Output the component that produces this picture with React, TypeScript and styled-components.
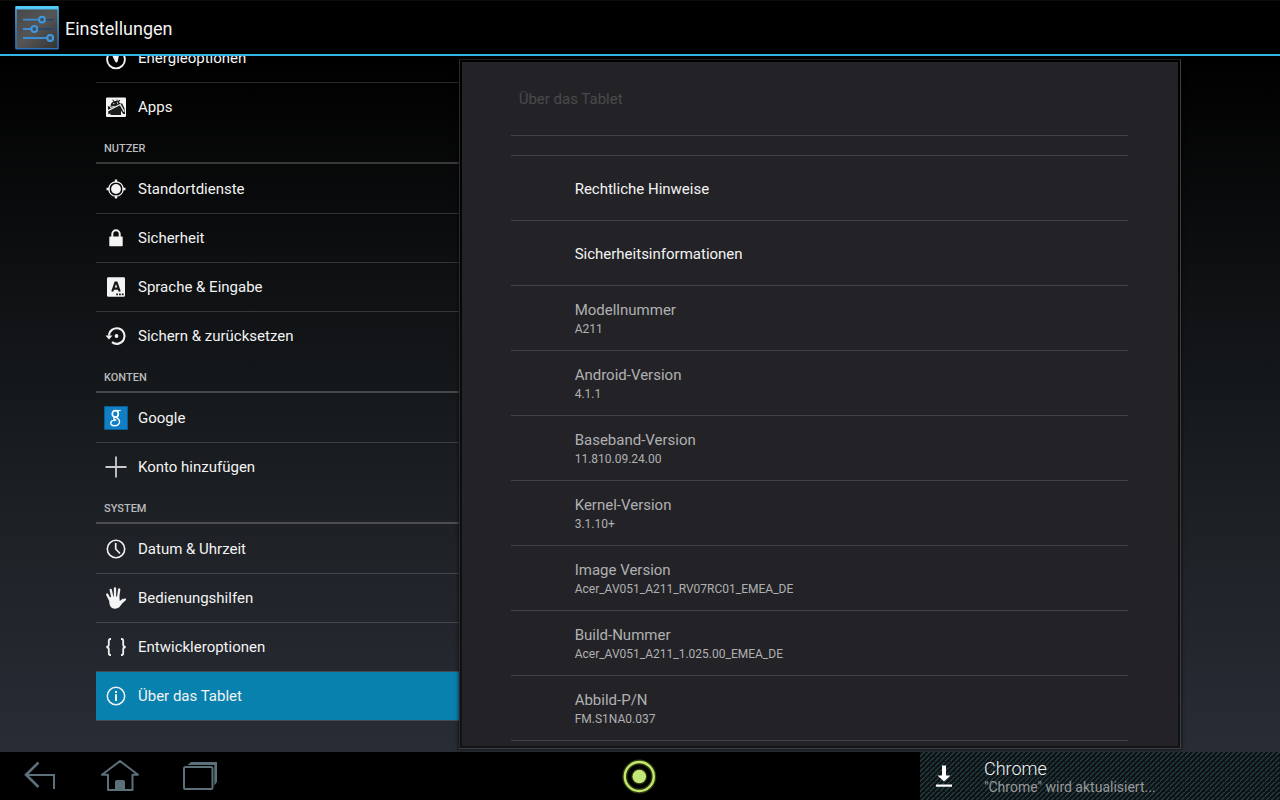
import React from "react";
import styled, { createGlobalStyle } from "styled-components";

const GlobalStyle = createGlobalStyle`
  * { box-sizing: border-box; }
  html, body, #root { height: 100%; }
  body {
    margin: 0;
    background: #000;
    color: #f3f3f3;
    font-family: Roboto, "Noto Sans", sans-serif;
    font-size: 15px;
    overflow: hidden;
  }
  h1, h2, h3, p, ul, dl, dd { margin: 0; padding: 0; }
  ul { list-style: none; }
  svg { display: block; flex: none; }
`;

const Screen = styled.div`
  display: grid;
  grid-template-rows: 56px minmax(0, 1fr) 48px;
  height: 100vh;
`;

const ActionBar = styled.header`
  display: flex;
  align-items: center;
  gap: 5px;
  padding: 1px 14px 0;
  background: #000;
  border-top: 1px solid #0c0c0c;
  border-bottom: 2px solid #33b5e5;
`;

const Heading = styled.h1`
  padding-top: 1px;
  font-size: 18px;
  line-height: 24px;
  font-weight: 400;
`;

const Main = styled.main`
  display: grid;
  grid-template-columns: minmax(0, 1fr) minmax(0, 2fr);
  padding: 0 96px;
  overflow: hidden;
  background: linear-gradient(#000 0%, #090a0b 20%, #14171a 45%, #1d2024 66%, #282c35 100%);
`;

const Sidebar = styled.nav`
  min-height: 0;
  overflow: hidden;
`;

const SectionList = styled.div`
  margin-top: -22px;
`;

const SectionTitle = styled.h2`
  height: 33px;
  padding: 10px 8px 0;
  font-size: 11px;
  line-height: 14px;
  font-weight: 500;
  color: #b9bbbd;
  text-transform: uppercase;
  border-bottom: 1px solid transparent;
  background: linear-gradient(#ffffff33, #ffffff33) bottom / 100% 2px no-repeat;
  background-clip: padding-box;
  background-origin: padding-box;
`;

const Entry = styled.li`
  border-bottom: 1px solid #ffffff28;
  &:last-child { border-bottom-color: transparent; }
  section:last-child > ul > &:last-child { border-bottom-color: #ffffff28; }
`;

const EntryLink = styled.a<{ $active?: boolean }>`
  display: flex;
  align-items: center;
  gap: 10px;
  height: 48px;
  padding: 0 8px;
  color: inherit;
  text-decoration: none;
  white-space: nowrap;
  background: ${(p) => (p.$active ? "#0881ae" : "transparent")};
`;

const Detail = styled.section`
  position: relative;
  display: flex;
  min-height: 0;
  margin: 3px 3px 3px 0;
  padding: 2px;
  border: 1px solid #3c3e40;
  border-top-color: #1c1c1c;
  border-left-color: #2a2b2d;
  background: #00000090;
  box-shadow: 0 0 3px 1px #00000080;
`;

const DetailBody = styled.div`
  flex: 1;
  min-width: 0;
  padding: 0 50px 0 49px;
  overflow: hidden;
  background: #232327;
`;

const DetailTitle = styled.h2`
  height: 74px;
  padding: 25px 8px 0;
  font-size: 15px;
  line-height: 24px;
  font-weight: 400;
  color: #49494b;
  border-bottom: 1px solid #434347;
`;

const InfoList = styled.dl`
  margin-top: 19px;
  border-top: 1px solid #434347;
`;

const Info = styled.div`
  display: flex;
  flex-direction: column;
  justify-content: center;
  height: 65px;
  padding: 1px 0 0 64px;
  border-bottom: 1px solid #434347;
`;

const InfoName = styled.dt<{ $enabled?: boolean }>`
  line-height: 20px;
  color: ${(p) => (p.$enabled ? "#f3f3f3" : "#b0b0b2")};
`;

const InfoValue = styled.dd`
  font-size: 12px;
  line-height: 18px;
  color: #b0b0b2;
`;

const SystemBar = styled.footer`
  display: grid;
  grid-template-columns: minmax(0, 1fr) auto minmax(0, 1fr);
  align-items: center;
  background: #000;
`;

const NavKeys = styled.div`
  display: flex;
`;

const Key = styled.button`
  display: flex;
  align-items: center;
  justify-content: center;
  width: 80px;
  height: 48px;
  padding: 0;
  border: 0;
  background: none;
  color: #5b7078;
`;

const Ticker = styled.aside`
  justify-self: end;
  display: flex;
  align-items: center;
  gap: 28px;
  width: 360px;
  height: 48px;
  padding: 2px 0 0 12px;
  background: #101214 linear-gradient(135deg, transparent 40%, #1c3a40 40% 60%, transparent 60%) 0 0 / 5px 5px;
`;

const TickerTitle = styled.p`
  font-size: 18px;
  line-height: 20px;
  font-weight: 300;
  color: #f3f3f3;
`;

const TickerText = styled.p`
  font-size: 14px;
  line-height: 16px;
  color: #969899;
`;

const SettingsLogo = () => (
  <svg width="46" height="46" viewBox="0 0 46 46" aria-hidden="true">
    <defs>
      <linearGradient id="face" x1="0" y1="0" x2="1" y2="1">
        <stop offset="0" stopColor="#484848" />
        <stop offset=".5" stopColor="#555" />
        <stop offset="1" stopColor="#343434" />
      </linearGradient>
      <linearGradient id="edge" x1="0" y1="0" x2="0" y2="1">
        <stop offset="0" stopColor="#42bdf0" />
        <stop offset="1" stopColor="#2a6fc0" />
      </linearGradient>
    </defs>
    <rect x="1.2" y="1" width="43.6" height="43.5" rx="1" fill="url(#edge)" />
    <rect x="2.6" y="4.5" width="40.8" height="38.5" fill="url(#face)" />
    <path d="M2 2.500h42" stroke="#54cdf8" strokeWidth="2.600" />
    <path d="M27 14.700h12M20 24h19" stroke="#20466f" strokeWidth="1.500" />
    <path d="M9 14.700h16M9 24h9M9 33h25" stroke="#3c8dd5" strokeWidth="1.800" />
    <g fill="#3d5060" stroke="#4296dc" strokeWidth="2">
      <circle cx="28" cy="14.600" r="2.900" />
      <circle cx="20.300" cy="24" r="2.900" />
      <circle cx="36.200" cy="33" r="2.900" />
    </g>
  </svg>
);

const Glyph = ({ children }: { children: React.ReactNode }) => (
  <svg width="24" height="24" viewBox="0 0 24 24" fill="none" stroke="#f0f0f0" strokeWidth="1.8" aria-hidden="true">
    {children}
  </svg>
);

const solid = { fill: "#f4f4f4", stroke: "none" };

const icons = {
  power: (
    <Glyph>
      <circle cx="12" cy="13.500" r="8.900" strokeWidth="1.900" />
      <path {...solid} d="M7.500 8L12 10l3-1-1.300 6.500-1.400 1.200-1.200-1.200z" />
    </Glyph>
  ),
  apps: (
    <Glyph>
      <rect {...solid} x="2" y="2.500" width="20" height="19.500" rx="1" />
      <path fill="#1a1c1d" stroke="none" d="M6.800 9.500C7.200 8 8.200 7 9.500 6.700L8.300 5l.7-.5 1.400 1.700c.8-.2 1.500-.2 2.200-.1V4.500h.9v1.800l2.200-1.500.6.700-1.500 1.600 1.700 1.400h1.700l2.300 5 .6 5.500h-1.900L17 15.500v4.500H6.500v-1.500l-2.200.8-.4-8.300 2.600 1z" />
      <path d="M3.500 15.800l12.700-6.300 4 7.300" strokeWidth="1.300" />
      <path d="M6 12.500l4.500-1.200" strokeWidth="1" />
      <circle {...solid} cx="9.800" cy="8.600" r=".7" />
      <circle {...solid} cx="13.500" cy="8" r=".7" />
    </Glyph>
  ),
  location: (
    <Glyph>
      <circle {...solid} cx="12" cy="12" r="4.900" />
      <circle cx="12" cy="12" r="7.200" strokeWidth="1.300" />
      <path d="M12 2.500v3M12 18.500v3M2.500 12h3M18.500 12h3" strokeWidth="2.400" />
    </Glyph>
  ),
  lock: (
    <Glyph>
      <rect {...solid} x="5.300" y="10.500" width="13.400" height="9.700" rx=".6" />
      <path d="M8.300 12V8a3.700 3.700 0 0 1 7.400 0V12" strokeWidth="2" />
    </Glyph>
  ),
  language: (
    <Glyph>
      <rect {...solid} x="3" y="2.300" width="18" height="19.400" rx="1.300" />
      <path d="M8.300 16.500L11.400 7.500h1.200l3.100 9M9.500 13.700h5" stroke="#151719" strokeWidth="2.200" />
      <path d="M12.200 19.300h7.400" stroke="#151719" strokeWidth="1.800" strokeDasharray="1.800 1" />
    </Glyph>
  ),
  backup: (
    <Glyph>
      <path d="M5 11.500A7.800 7.800 0 1 1 8 18.200" strokeWidth="2.100" />
      <path {...solid} d="M1.500 11.500h7L5 15.500z" />
      <circle {...solid} cx="12.500" cy="12" r="1.900" />
    </Glyph>
  ),
  google: (
    <svg width="24" height="24" viewBox="0 0 24 24" fill="none" aria-hidden="true">
      <rect x=".5" y=".5" width="23" height="23" fill="#117fc6" stroke="#0c5b90" />
      <g stroke="#fff">
        <ellipse cx="11.300" cy="7.900" rx="3" ry="3.300" strokeWidth="1.700" />
        <path d="M11.500 4.500h5.200" strokeWidth="1.100" />
        <path d="M12.300 11c.3 1 2.800 1.800 3.200 4.200.4 2.800-1.800 4.500-4.500 4.500-2.500 0-4.200-1-4.200-2.800 0-2 2.300-3 5.500-2.900M10.300 11.300c-1 1.200-.3 2 1 2.900" strokeWidth="1.400" />
      </g>
    </svg>
  ),
  add: (
    <Glyph>
      <path d="M12 1.500v21M1.500 12h21" stroke="#c9cacb" strokeWidth="1.800" />
    </Glyph>
  ),
  clock: (
    <Glyph>
      <circle cx="12" cy="12" r="8.700" strokeWidth="1.600" />
      <path d="M11.700 6v6l4.300 4.500" strokeWidth="1.700" />
    </Glyph>
  ),
  hand: (
    <Glyph>
      <g strokeLinecap="round" strokeWidth="2.300">
        <path d="M3.200 8.500L6 14M6.700 3.800L8.500 12M11 2.500V12M15.200 3.500L14 12M21 13.500L16 18" />
      </g>
      <path {...solid} d="M5 12l2.500-1.500h7.800l.5 4.500 3.200-2.500 1.800 1.500c-2 1.500-3 4-4.500 6s-3 2.700-5.600 2.700c-3.200 0-4.700-2.200-5.200-4.700z" />
    </Glyph>
  ),
  braces: (
    <Glyph>
      <path d="M7 4H6.300Q4.800 4 4.800 6v3.500Q4.800 12 2.300 12 4.800 12 4.800 14.500V18q0 2 1.500 2H7M17 4h.7q1.500 0 1.500 2v3.500q0 2.500 2.500 2.500-2.500 0-2.500 2.500V18q0 2-1.500 2H17" />
    </Glyph>
  ),
  info: (
    <Glyph>
      <circle cx="12" cy="12" r="8.700" strokeWidth="1.500" />
      <path d="M12 7v2M12 10.300v6.700" strokeWidth="2" />
    </Glyph>
  ),
};

type Item = { icon: keyof typeof icons; label: string; active?: boolean };

const sections: { title?: string; items: Item[] }[] = [
  {
    items: [
      { icon: "power", label: "Energieoptionen" },
      { icon: "apps", label: "Apps" },
    ],
  },
  {
    title: "Nutzer",
    items: [
      { icon: "location", label: "Standortdienste" },
      { icon: "lock", label: "Sicherheit" },
      { icon: "language", label: "Sprache & Eingabe" },
      { icon: "backup", label: "Sichern & zurücksetzen" },
    ],
  },
  {
    title: "Konten",
    items: [
      { icon: "google", label: "Google" },
      { icon: "add", label: "Konto hinzufügen" },
    ],
  },
  {
    title: "System",
    items: [
      { icon: "clock", label: "Datum & Uhrzeit" },
      { icon: "hand", label: "Bedienungshilfen" },
      { icon: "braces", label: "Entwickleroptionen" },
      { icon: "info", label: "Über das Tablet", active: true },
    ],
  },
];

const details: { name: string; value?: string }[] = [
  { name: "Rechtliche Hinweise" },
  { name: "Sicherheitsinformationen" },
  { name: "Modellnummer", value: "A211" },
  { name: "Android-Version", value: "4.1.1" },
  { name: "Baseband-Version", value: "11.810.09.24.00" },
  { name: "Kernel-Version", value: "3.1.10+" },
  { name: "Image Version", value: "Acer_AV051_A211_RV07RC01_EMEA_DE" },
  { name: "Build-Nummer", value: "Acer_AV051_A211_1.025.00_EMEA_DE" },
  { name: "Abbild-P/N", value: "FM.S1NA0.037" },
];

export default function App() {
  return (
    <Screen>
      <GlobalStyle />
      <ActionBar>
        <SettingsLogo />
        <Heading>Einstellungen</Heading>
      </ActionBar>

      <Main>
        <Sidebar>
          <SectionList>
            {sections.map((section, i) => (
              <section key={i}>
                {section.title && <SectionTitle>{section.title}</SectionTitle>}
                <ul>
                  {section.items.map((item) => (
                    <Entry key={item.label}>
                      <EntryLink href="#" $active={item.active}>
                        {icons[item.icon]}
                        {item.label}
                      </EntryLink>
                    </Entry>
                  ))}
                </ul>
              </section>
            ))}
          </SectionList>
        </Sidebar>

        <Detail>
          <DetailBody>
            <DetailTitle>Über das Tablet</DetailTitle>
            <InfoList>
              {details.map((d) => (
                <Info key={d.name}>
                  <InfoName $enabled={!d.value}>{d.name}</InfoName>
                  {d.value && <InfoValue>{d.value}</InfoValue>}
                </Info>
              ))}
            </InfoList>
          </DetailBody>
        </Detail>
      </Main>

      <SystemBar>
        <NavKeys>
          <Key aria-label="Zurück">
            <svg width="40" height="40" viewBox="0 0 40 40" fill="none" stroke="currentColor" strokeWidth="2">
              <path d="M18.500 6.500L6 18.800 18.500 31" strokeWidth="2.600" />
              <path d="M6 19h28v14" />
            </svg>
          </Key>
          <Key aria-label="Startseite">
            <svg width="40" height="40" viewBox="0 0 40 40" fill="none" stroke="currentColor" strokeWidth="2" strokeLinejoin="round">
              <path d="M20 5L2 18.800H8V34h24.500V18.800H38z" />
              <path fill="currentColor" stroke="none" d="M15 34.500V26q0-2 2-2h6q2 0 2 2v8.500z" />
            </svg>
          </Key>
          <Key aria-label="Letzte Apps">
            <svg width="40" height="40" viewBox="0 0 40 40" fill="none" stroke="currentColor" strokeWidth="2">
              <rect x="4" y="11" width="28.500" height="22" rx="1.500" />
              <path fill="currentColor" stroke="none" d="M7.500 9L11 6h26v20l-2.700 3.500V9z" />
            </svg>
          </Key>
        </NavKeys>
        <Key aria-label="Acer Ring">
          <svg width="40" height="40" viewBox="0 0 40 40" fill="none">
            <circle cx="19.300" cy="20.500" r="14.500" stroke="#a3cf3e" strokeOpacity=".3" strokeWidth="5" />
            <circle cx="19.300" cy="20.500" r="14.500" stroke="#c3e86b" strokeWidth="2.400" />
            <circle cx="19.300" cy="20.500" r="8" fill="#a3cf3e" fillOpacity=".25" />
            <circle cx="19.300" cy="20.500" r="6.800" fill="#c3e877" />
          </svg>
        </Key>
        <Ticker>
          <svg width="24" height="24" viewBox="0 0 24 24" fill="#fff" aria-hidden="true">
            <path d="M10 .5h4v10h4.500L12 16.500 5.500 10.500H10zM4 19.500h16v2.200H4z" />
          </svg>
          <div>
            <TickerTitle>Chrome</TickerTitle>
            <TickerText>"Chrome" wird aktualisiert...</TickerText>
          </div>
        </Ticker>
      </SystemBar>
    </Screen>
  );
}
